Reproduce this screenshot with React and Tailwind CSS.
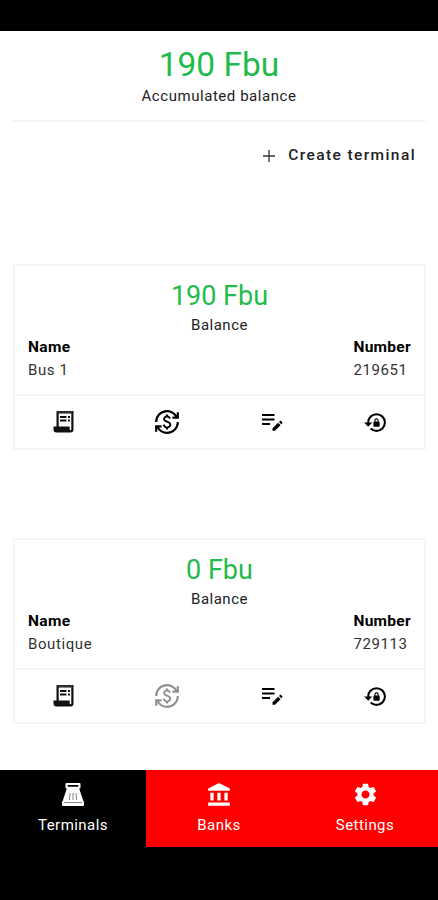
import React from "react";
import {
  MdAccountBalance,
  MdCurrencyExchange,
  MdLockReset,
  MdSettings,
} from "react-icons/md";

const terminals = [
  { name: "Bus 1", number: "219651", balance: 190 },
  { name: "Boutique", number: "729113", balance: 0 },
];

function PlusIcon() {
  return (
    <svg viewBox="0 0 12 12" className="w-3 h-3" stroke="#333" strokeWidth="1.3">
      <path d="M6 0v12M0 6h12" />
    </svg>
  );
}

function ReceiptIcon() {
  return (
    <svg viewBox="0 0 21 22" className="w-[21px] h-[22px]">
      <path d="M3.500 0h17v18.500q0 3-3 3h-14q-3 0-3-3v-3h3z" fill="#111" />
      <path d="M5.700 2.500h12.600v16q0 .8-.8.800t-.8-.8v-3h-11z" fill="#fff" />
      <path d="M3.500 1h17" stroke="#777" strokeWidth="1" strokeDasharray="1.500 1.300" />
      <path d="M7 6h6.500M15 6h2M7 9.500h6.500M15 9.500h2" stroke="#111" strokeWidth="1.800" />
    </svg>
  );
}

function ListEditIcon() {
  return (
    <svg viewBox="0 0 22 18" className="w-[22px] h-[18px]" fill="#000">
      <path d="M1 1h12.500v2H1zM1 5.500h12.500v2H1zM1 10h8v2H1z" />
      <path d="M11.500 15.300v2.500h2.500l5.600-5.600-2.500-2.500zM18 9l2.300 2.300 1-1c.3-.3.3-.7 0-1L20 8c-.3-.3-.7-.3-1 0z" />
    </svg>
  );
}

function RegisterIcon() {
  return (
    <svg viewBox="0 0 24 24" className="w-6 h-6" fill="#fff">
      <path
        fillRule="evenodd"
        d="M5.500 0h13q1 0 1 1v3.500q0 1-1 1h-13q-1 0-1-1V1q0-1 1-1zM6.700 2v1.700h10.600V2z"
      />
      <path d="M6 5h12l4.500 13.500h-21z" />
      <path d="M2 18h20q1 0 1 1v3q0 1-1 1H2q-1 0-1-1v-3q0-1 1-1z" />
      <path
        d="M9 10l-.6 7M12 10v7M15 10l.6 7M3 19.500h18"
        stroke="#888"
        strokeWidth="1"
        fill="none"
      />
    </svg>
  );
}

function TerminalCard(props) {
  const { name, number, balance } = props.terminal;
  return (
    <div className="ml-[13px] mr-3 h-[186px] border-2 border-[#f6f6f6]">
      <div className="h-[130px] border-b-2 border-[#f6f6f6] px-[13px] pt-[14px]">
        <h2 className="text-center text-[27px] leading-8 text-[#1fbb4c]">
          {balance} Fbu
        </h2>
        <p className="mt-[3px] text-center text-[15px] leading-5 tracking-[0.500px]">
          Balance
        </p>
        <div className="mt-px flex justify-between text-[15px] leading-[23px]">
          <div>
            <p className="text-[15.500px] font-bold tracking-[0.400px] text-black">Name</p>
            <p className="tracking-[0.600px] text-[#333]">{name}</p>
          </div>
          <div>
            <p className="text-[15.500px] font-bold tracking-[0.300px] text-black">Number</p>
            <p className="tracking-[0.600px] text-[#333]">{number}</p>
          </div>
        </div>
      </div>
      <div className="flex h-[52px] items-center justify-between pl-[38px] pr-[36px]">
        <ReceiptIcon />
        <MdCurrencyExchange
          className={`h-[26px] w-[26px] ${balance === 0 ? "text-[#929292]" : "text-black"}`}
        />
        <ListEditIcon />
        <MdLockReset className="h-[25px] w-[25px] text-black" />
      </div>
    </div>
  );
}

function App() {
  return (
    <div className="flex h-[900px] w-[438px] flex-col overflow-hidden bg-white font-['Roboto',sans-serif] text-[#222]">
      <div className="h-[31px] shrink-0 bg-black" />

      {/* Accumulated balance */}
      <div className="mx-3 h-[91px] shrink-0 border-b-2 border-[#f6f6f6] pt-[14px] text-center">
        <h1 className="text-[33.500px] leading-10 text-[#1fbb4c]">190 Fbu</h1>
        <p className="mt-px text-[15px] leading-5 tracking-[0.550px]">
          Accumulated balance
        </p>
      </div>

      <div className="flex h-[66px] shrink-0 items-center justify-end pr-[22px] pt-px">
        <button className="flex items-center gap-[13px] text-[15.500px] font-medium tracking-[1.400px]">
          <PlusIcon />
          Create terminal
        </button>
      </div>

      <div className="flex grow flex-col gap-[88px] pt-[76px]">
        {terminals.map((terminal, i) => {
          return <TerminalCard terminal={terminal} key={i} />;
        })}
      </div>

      {/* Bottom tabs */}
      <div className="grid h-[77px] shrink-0 grid-cols-3 bg-[#fe0000] text-[15px] tracking-[0.450px] text-white">
        <div className="flex flex-col items-center bg-black pt-[13px]">
          <RegisterIcon />
          <span className="mt-2 leading-5">Terminals</span>
        </div>
        <div className="flex flex-col items-center pt-3">
          <MdAccountBalance className="h-[26px] w-[26px]" />
          <span className="mt-[7px] leading-5">Banks</span>
        </div>
        <div className="flex flex-col items-center pt-[11px]">
          <MdSettings className="h-[27px] w-[27px]" />
          <span className="mt-[7px] leading-5">Settings</span>
        </div>
      </div>
      <div className="h-[53px] shrink-0 bg-black" />
    </div>
  );
}

export default App;
